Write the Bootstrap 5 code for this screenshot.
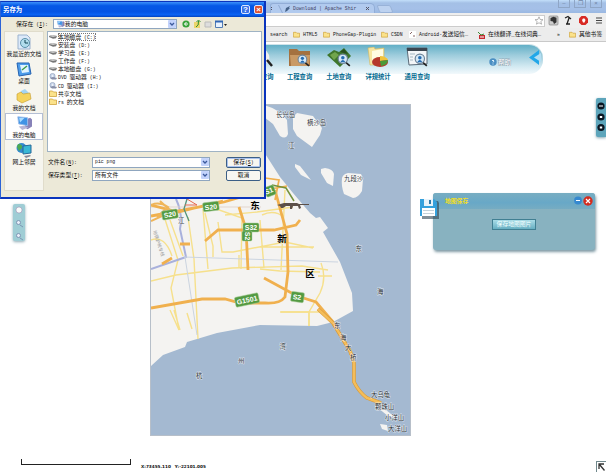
<!DOCTYPE html>
<html lang="zh-CN">
<head>
<meta charset="utf-8">
<title>地图保存</title>
<link href="https://cdn.jsdelivr.net/npm/bootstrap@5.3.0/dist/css/bootstrap.min.css" rel="stylesheet">
<style>
body{width:606px;height:472px;overflow:hidden;background:#fff;color:#111;font:5.8px/8px "Liberation Sans","Noto Sans CJK SC",sans-serif;white-space:nowrap}
svg{display:block;flex:none}
.lt{font-family:"Liberation Mono","Noto Sans CJK SC",monospace;font-size:4.8px}
/* browser frame */
.tabstrip{height:13px;background:linear-gradient(#c3dffa 0,#a4c0e6 3px,#a5c0e8 9px,#9ab8e2);padding-left:270px;font-size:4.8px;color:#446}
.tab-one{width:105px;height:10px;background:#b1caee;border:1px solid #91add7;border-bottom:0;border-radius:3px 5px 0 0;line-height:9px}
.tab-new{width:14px;height:8px;margin-left:3px;background:#bdd2f0;border:1px solid #98b2d8;transform:skewX(22deg);border-radius:2px}
.wbtn{width:12px;height:8px;border:1px solid #8fa6c6;border-top:0;color:#6f84a5;line-height:7px;font-size:6px}
.toolbar{height:15px;background:#eee}
.omni{width:545px;height:12px;background:#fff;border:1px solid #ccc}
.bookmarks{height:14px;background:#ececec;border-bottom:1px solid #c9c9c9;padding-left:270px}
.bm{flex:none;gap:3px}
.w1{width:23px}.w2{width:30px}.w3{width:58px}.w4{width:28px}.w5{width:69px}.w6{width:79px}.w7{width:12px}
/* application banner */
.banner{width:543px;height:29px;margin-top:3px;padding-left:280px;background:linear-gradient(#62afc6 0,#9dccdc 35%,#d4eaf2 75%,#f2f9fc);border-radius:0 14px 14px 0;box-shadow:0 -1px 0 #cfe3ea}
.mod{width:39.2px;color:#00698f;font-weight:700;font-size:6.3px;padding-top:2px}
.mod span{margin-top:5px}
.help{margin:13px 0 0 52px;color:#9fb2c2;font-size:7px}
/* save dialog */
.dlg{left:0;top:1px;width:266px;height:198px;background:#ece9d8;border:2px solid #0a34bd;border-width:1px 2px 2px 1px;border-left-color:#2c63d6;z-index:5}
.dlg-title{height:15px;background:linear-gradient(#3a91fb,#0458e6 25%,#0454e4 65%,#0a63f4 85%,#0342bd);color:#fff;font-weight:700;font-size:6.4px;padding:0 1px 0 2px}
.tb{width:9px;height:9px;border:1px solid #dbe6ff;border-radius:2px;font-size:8px;line-height:7px;background:#3b73e8}
.tb-x{background:#dd5331}
.dd{background:#fff;border:1px solid #8fa6bf;height:10px;padding-left:2px}
.arr{width:8px;height:8px;background:#c3d3fb;border-radius:1px}
.look{height:14px;padding-left:15px}
.look .dd{width:124px;margin-left:5px}
.places{width:40px;height:160px;background:#f6f5ee;border:1px solid #e0dccb;margin-left:3px}
.place{height:27px;padding-top:2px}
.place.on{background:#fff;border:1px solid #b4bfd4;padding-top:1px}
.files{width:215px;height:121px;background:#fff;border:1px solid #9fb3c4;margin-left:3px;padding:1px 0 0 1px}
.fl{height:8.1px;line-height:8px;gap:1px}
.sel{outline:1px dotted #777;outline-offset:-1px}
.frow{height:12.7px;padding-left:4px}
.frow .lab{width:44px}.frow .dd{width:118px;height:11px}
.btx{width:35px;height:11px;border:1px solid #3c5f86;border-radius:2px;background:#f7f6f1;margin-left:16px;line-height:9px}
.btx.pri{box-shadow:inset 0 0 0 1px #a9c2ee}
/* floating pieces */
.mapbox{left:150px;top:104px;width:261px;height:332px;border:1px solid #b7bfc9}
.minibar{left:13px;top:204px;width:12px;height:37px;background:#9fcdd5;border-radius:2px;box-shadow:0 1px 3px #8fabb5;z-index:3}
.sidebar3{right:0;top:98px;width:10px;height:39px;background:#5da5bb;border-radius:2px 0 0 2px;box-shadow:0 1px 3px #86a8b4}
.panel{left:433px;top:193px;width:162px;height:57px;background:#88b2c0;border-radius:3px;box-shadow:1px 2px 3px #7f9aa5}
.panel-h{height:16px;background:linear-gradient(#78adc2,#68a8c7 60%,#76acc2);border-radius:3px 3px 0 0;padding:0 2px 1px 12px;color:#f3df25;font-weight:700;font-size:5.8px}
.savebtn{width:44px;height:11px;margin:10px 0 0 59px;background:linear-gradient(#a9dce7,#67afc2);border:1px solid #417f92;color:#f2ffff;line-height:9px}
.disk{left:418px;top:198px;z-index:2}
.scale{left:21px;top:459px;width:110px;height:6px;border:1px solid #222;border-top:0}
.coords{left:141px;top:463px;font:700 4.2px/8px "DejaVu Sans",sans-serif;gap:4px}
.corner{right:0;top:461px;width:10px;height:11px;border:1px solid #70888c;border-right:0;border-bottom:0}
</style>
<script src="https://cdn.jsdelivr.net/npm/bootstrap@5.3.0/dist/js/bootstrap.bundle.min.js"></script>
</head>
<body class="position-relative">
<svg width="0" height="0" class="position-absolute">
<defs>
<symbol id="fold" viewBox="0 0 8 7"><path d="M.5 6.500v-5.500h3l1 1h3v4.500z" fill="#fbe28a" stroke="#c99a2e" stroke-width=".7"/></symbol>
<symbol id="drv" viewBox="0 0 8 7"><path d="M0 3l3-1 5 1-1 2.300-3 .5-4-1.800z" fill="#777"/><path d="M0 3l3-1 5 1-4 1z" fill="#ccc"/></symbol>
<symbol id="cd" viewBox="0 0 8 7"><circle cx="3.500" cy="3" r="2.600" fill="#cbd7ea" stroke="#8393b4" stroke-width=".6"/><circle cx="3.500" cy="3" r=".7" fill="#fff"/><path d="M1 5l3-1 4 1-1 1.500H3z" fill="#888fa8"/></symbol>
<symbol id="pc" viewBox="0 0 20 18"><path d="M12 5l5-2 2 2v8l-5 3-3-2z" fill="#8782b8"/><path d="M3 2l11 1v9L4 10z" fill="#3f93e5" stroke="#9dbce9"/><path d="M4.500 3l6 .5-5 5z" fill="#a9dcff"/><path d="M4 13l6-1 5 2-7 3z" fill="#b7b6d6"/></symbol>
<symbol id="chev" viewBox="0 0 8 8"><path d="M2 3l2 2 2-2" fill="none" stroke="#3c5a9c" stroke-width="1.300"/></symbol>
<symbol id="lens" viewBox="0 0 12 12"><path d="M7.500 8l3.500 3" stroke="#222" stroke-width="1.500"/><circle cx="5" cy="5" r="4" fill="#d5e9f7" stroke="#6f8497"/><circle cx="5" cy="4" r="1.500" fill="#246bb0"/><path d="M2.800 8q2.200-4 4.400 0z" fill="#246bb0"/></symbol>
</defs>
</svg>

<div class="tabstrip d-flex align-items-end">
  <div class="tab-one d-flex align-items-center">
    <svg width="22" height="8"><path d="M-2 2l3 3m0-3l-3 3" stroke="#556"/><path d="M7-1l5 10" stroke="#8ea9d3"/><path d="M14 7l1-4 4-2-1 2h1l-3 3z" fill="#456288"/></svg>
    <span class="lt">Download | Apache Shir</span><svg class="ms-auto me-1" width="5" height="5"><path d="M1 1l3 3m0-3l-3 3" stroke="#556"/></svg>
  </div>
  <div class="tab-new"></div>
  <div class="d-flex ms-auto align-self-start me-1 text-center gap-1"><div class="wbtn">–</div><div class="wbtn">❐</div><div class="wbtn">×</div></div>
</div>
<div class="toolbar d-flex align-items-center">
  <div class="omni d-flex justify-content-end align-items-center"><svg width="10" height="9"><path d="M5 .8l1.200 2.700 2.800.2-2.200 1.800.8 2.700L5 6.800 2.400 8.200l.8-2.700L1 3.700l2.800-.2z" fill="#fff" stroke="#888" stroke-width=".6"/></svg></div>
  <svg width="59" height="13"><rect x="4" y="2" width="9" height="9" rx="1" fill="#ccc" stroke="#777" stroke-width=".6"/><path d="M5.500 4l3-1.200 3 1v4.500L9 10 8 7.500 5.500 7z" fill="#333"/><path d="M20 4l3-1.500L26 5M22 10l2-6m-3 6h4" stroke="#222" stroke-width="1.300" fill="none"/><path d="M36.500 2h4l2.500 2.500v4L40.500 11h-4L34 8.500v-4z" fill="#d82a24"/><path d="M37 6l1 2.500h1.500l1-2.500-1-1.500h-1.500z" fill="#fff"/><path d="M51 4h6m-6 2.500h6M51 9h6" stroke="#444" stroke-width="1.200"/></svg>
</div>
<div class="bookmarks lt d-flex align-items-center">
  <div class="bm w1">search</div>
  <div class="bm w2 d-flex align-items-center"><svg width="7" height="7"><use href="#fold"/></svg>HTML5</div>
  <div class="bm w3 d-flex align-items-center"><svg width="7" height="7"><use href="#fold"/></svg>PhoneGap-Plugin</div>
  <div class="bm w4 d-flex align-items-center"><svg width="7" height="7"><use href="#fold"/></svg>CSDN</div>
  <div class="bm w5 d-flex align-items-center"><svg width="7" height="7"><rect width="7" height="7" fill="#fff"/><path d="M1 3l2-2m1 4h2" stroke="#866"/></svg><span>Android-<span style="font-size:5.7px">发送短信…</span></span></div>
  <div class="bm w6 d-flex align-items-center"><svg width="7" height="8"><path d="M1 4h6v4H1z" fill="#c62a30"/><path d="M0 1l3 3 3-1" stroke="#3a8c35" fill="none"/><path d="M2 6h4" stroke="#fff"/></svg><span style="font-size:5.8px">在线翻译_在线词典…</span></div>
  <div class="bm w7">»</div>
  <div class="bm d-flex align-items-center"><svg width="7" height="7"><use href="#fold"/></svg><span style="font-size:5.8px">其他书签</span></div>
</div>

<div class="banner d-flex align-items-start">
  <div class="mod d-flex flex-column align-items-center"><svg width="24" height="21"><path d="M1 19V2h8l2 2h11v15z" fill="#a4713f"/><path d="M3 19L2 8h20l-1 11z" fill="#c99a65"/><use href="#lens" x="9" y="7" width="13" height="13"/></svg><span>工程查询</span></div>
  <div class="mod d-flex flex-column align-items-center"><svg width="26" height="21"><path d="M1 8l7-5 5 2 5-4 7 8-11 11z" fill="#3e762c"/><path d="M4 8l5-3 4 3-5 5z" fill="#71a54c"/><path d="M14 5l4-3 4 5z" fill="#274f20"/><use href="#lens" x="11" y="6" width="14" height="14"/></svg><span>土地查询</span></div>
  <div class="mod d-flex flex-column align-items-center"><svg width="24" height="21"><path d="M2 1l6-1 1 2 9-1v17H4z" fill="#f6e5a2" stroke="#d2b75c" stroke-width=".6"/><path d="M6 4l11-2v14H6z" fill="#fffbe3"/><ellipse cx="14" cy="15" rx="8" ry="5" fill="#b5372b"/><path d="M14 14V9q6 0 8 4z" fill="#f1c33b"/><path d="M14 14l8-1q0 5-7 6z" fill="#4b9a37"/></svg><span>详规统计</span></div>
  <div class="mod d-flex flex-column align-items-center"><svg width="24" height="21"><path d="M2 1h20v16l-18 1z" fill="#f3f6f8" stroke="#5a6a78"/><path d="M2 1h20v3H2z" fill="#3b4650"/><path d="M5 7h5m-5 3h3m-3 3h3" stroke="#a5b9c4"/><use href="#lens" x="9" y="6" width="14" height="14"/></svg><span>通用查询</span></div>
  <div class="help d-flex align-items-center"><svg width="9" height="8"><circle cx="4" cy="4" r="3.700" fill="#4b8fc3"/><path d="M3 3q1-2 2 0L4 4.500m0 1v1" stroke="#d9eefa" fill="none"/></svg><svg width="16" height="8"><text x="0" y="6.500" font-size="6.600" fill="#fff" stroke="#91a7b5" stroke-width=".9" paint-order="stroke">帮助</text></svg></div>
  <svg class="ms-auto" width="14" height="28"><path d="M10 5v15L0 12.500z" fill="#22a7e8"/><path d="M12 8v9l-7-4.500z" fill="#b2def4"/></svg>
</div>
<div class="position-absolute fw-bold" style="left:261px;top:73px;color:#00698f;font-size:6.3px">查询</div>
<svg class="position-absolute" style="left:264px;top:48px" width="10" height="20"><path d="M0 1q7 4 5 14H0z" fill="#eee"/><path d="M3 12l5 6" stroke="#222" stroke-width="2.500"/></svg>

<div class="mapbox position-absolute">
<svg width="259" height="330" viewBox="151 105 259 330" font-size="6.400" fill="none">
  <rect x="151" y="105" width="259" height="330" fill="#a4b9d1"/>
  <g fill="#f4f3f1">
    <path d="M151 105h113v47l16 25 13 16 17 20 6 5 4-1 8 11-5 4 17 30 12 31 1 18-20 11-16 4-57-1-43 8-30 9-2 5-22 8-12 11z"/>
    <path d="M264 105q17 5 23 15l1 14q-2 6-8 2l-7-12-9-7z"/>
    <path d="M293 117l4-4 16 3 9 12-2 7-8 12-15-11-4-7zM295 164l5 2 11 14-10-5-6-8zM321 169l4-1q8 1 9 6l-1 12-6-3-6-10zM342 178q1-4 6-5l13 1 2 5-1 12q-4 7-9 7l-9-4q-3-8-2-16z"/>
    <path d="M378 408l8 2 10 8-8-2zM380 424l7 1 1 6-6-2z"/>
  </g>
  <g stroke="#f6e08c" stroke-width="1.400">
    <path d="M151 281l25-6 56-7 70-2 26 4M188 217l6 42 4 80M164 216l14 44-7 28 8 42M170 220l13 36M151 240q14-5 21 16M205 213l8 33v11M218 222l4 30h11l52-10 28 6M225 215l32-3 36-5M239 255v13M260 220l4 48M285 190l-4 80M205 205l37 13-1 51M321 263q6 15-1 30l-11 19v14M280 312h40M174 310l6 20M262 215q12-6 22 2M318 276h14M208 269l-5-60M262 247h52"/>
    <path d="M170 310l9 20M187 313l5 16M281 312h28v14M260 269l20 2 40 1"/>
  </g>
  <path d="M176 199q7 15 4 30l6 28-35 12" stroke="#a9b1dc" stroke-width="2"/>
  <path d="M184 257l154 5M185 257l12 78" stroke="#cbd4e0"/>
  <path d="M151 207h110" stroke="#e3d5cd"/>
  <g stroke="#f0b04e" stroke-width="2.800">
    <path d="M151 308l51-9h23l15 4h25q15 1 20-6l3-25-1-38-12-44M205 241l13-11h56l22-5 4-5M151 216l33-6 40-8 41-12M239 207l7 22 2 41M264 278l33 18 19 6 17 20M151 205l27 7 45-11M180 244h10M162 264l10-6"/>
    <path d="M265 178l14 2-4 20M265 190l22-4" stroke-width="1.700"/>
  </g>
  <path d="M187 199l-3 10 5 12" stroke="#53947b" stroke-width="1.300"/><path d="M185 205h12l-10-6" stroke="#e5694f"/>
  <path d="M272 185l14 3 8 13" stroke="#76923c" stroke-width="1.500"/>
  <path d="M277 205l7-2h13l2 1h10v1h-9l1 3-2 1-1-3h-5l-1 3h-2v-3h-4l-3 2h-2l-1-2z" fill="#5c5049"/>
  <path d="M318 309l15 14 17 28 4 12v19q5 10 13 16l14 5" stroke="#d79a39" stroke-width="3.600"/>
  <path d="M318 309l15 14 17 28 4 12v19q5 10 13 16l14 5" stroke="#f4bd5a" stroke-width="2.400"/>
  <path d="M151 205q8-4 17 2l-11 10m3-16l13 12m-22 8l24-11" stroke="#efb55a" stroke-width="2"/>
  <g fill="#539a42" stroke="#a9cc99" stroke-width=".5">
    <rect x="162" y="210" width="16" height="9" rx="1.500" transform="rotate(-9 170 215)"/>
    <rect x="203" y="202" width="16" height="9" rx="1.500" transform="rotate(-7 211 207)"/>
    <rect x="265" y="186" width="10" height="10" rx="1.500" transform="rotate(-20 270 191)"/>
    <rect x="243" y="223" width="16" height="9" rx="1.500"/><rect x="242" y="231" width="10" height="10" rx="1.500"/>
    <rect x="235" y="295" width="24" height="10" rx="1.500" transform="rotate(-12 247 300)"/>
    <rect x="291" y="292" width="13" height="10" rx="1.500" transform="rotate(8 297 297)"/>
  </g>
  <g fill="#fff" font-weight="700" font-size="7" text-anchor="middle">
    <text x="170" y="217" transform="rotate(-9 170 215)">S20</text><text x="211" y="209.500" transform="rotate(-7 211 207)">S20</text>
    <text x="269" y="193" transform="rotate(-20 270 191)">S1</text><text x="251" y="230">S32</text><text x="0" y="0" transform="translate(244.500 236) rotate(90)">S2</text>
    <text x="247" y="302.500" transform="rotate(-12 247 300)">G1501</text><text x="297" y="299.500" transform="rotate(8 297 297)">S2</text>
  </g>
  <g fill="#000" font-weight="700" font-size="9.500" text-anchor="middle"><text x="255" y="209">东</text><text x="282" y="242">新</text><text x="310" y="277">区</text></g>
  <g fill="#30343a" stroke="#fff" stroke-width="1" paint-order="stroke" stroke-opacity=".65">
    <text x="276" y="117">长兴岛</text><text x="307" y="125">横沙岛</text><text x="288" y="147.500">江</text><text x="344" y="181">九段沙</text>
    <text x="355.500" y="250.500">东</text><text x="377" y="293.500">海</text><text x="279.500" y="349">湾</text><text x="238" y="363">州</text><text x="196" y="378">杭</text>
    <text x="334" y="328">东</text><text x="340" y="340">海</text><text x="345" y="350">大</text><text x="350" y="360">桥</text>
    <text x="371" y="397">大乌龟</text><text x="375" y="409">颗珠山</text><text x="385" y="420">小洋山</text><text x="388" y="431">大洋山</text><text x="178" y="223">江</text>
  </g>
  <text transform="translate(153 231) rotate(72)" font-size="4.500" fill="#999">地铁沪杭专线</text>
</svg>
</div>

<div class="minibar position-absolute"><svg width="12" height="37"><circle cx="6" cy="6" r="3" fill="#f8fbfa" stroke="#869"  stroke-width=".4"/><g fill="#e7eef8" stroke="#7187aa" stroke-width=".8"><path d="M7 21l3 2M7 34l3 2"/><circle cx="5.500" cy="18.500" r="2"/><circle cx="5.500" cy="31.500" r="2"/></g></svg></div>
<div class="sidebar3 position-absolute"><svg width="10" height="39"><g fill="#0a1622"><circle cx="5" cy="8" r="3.600"/><circle cx="5" cy="19" r="3.600"/><circle cx="5" cy="29.500" r="3.600"/></g><path d="M3.500 8h1m1 0h1M3.800 19h2.400m-2.400 10.500h2.400" stroke="#fff" stroke-width="1.800"/></svg></div>

<div class="panel position-absolute">
  <div class="panel-h d-flex align-items-center"><span>地图保存</span>
    <svg class="ms-auto" width="20" height="12"><circle cx="5" cy="5.500" r="3.900" fill="#3689d0"/><path d="M3 5.500h4" stroke="#fff"/><circle cx="15" cy="6" r="4.700" fill="#d32d20"/><path d="M13 4l4 4m0-4l-4 4" stroke="#fff" stroke-width="1.200"/></svg></div>
  <div class="savebtn text-center">保存地图图片</div>
</div>
<svg class="disk position-absolute" width="22" height="22"><path d="M4 3h16l1 2v16H4z" fill="#304552" opacity=".6"/><path d="M2 1h14l3 3v14H2z" fill="#35a0dc"/><path d="M6 1h9v7H6z" fill="#e8f3fa"/><path d="M11 2h2v4h-2z" fill="#2e78a8"/><path d="M4 10h13v8H4z" fill="#fff"/><path d="M5 12.500h11M5 15.500h11" stroke="#b6c7d1" stroke-width=".8"/></svg>

<div class="scale position-absolute"></div>
<div class="coords position-absolute d-flex"><span>X:73455.110</span><span>Y:-22101.005</span></div>
<div class="corner position-absolute"><svg width="9" height="10"><path d="M2 7V2h5M2.500 2.500l5 6" fill="none" stroke="#333" stroke-width="1.300"/></svg></div>

<div class="dlg position-absolute">
  <div class="dlg-title d-flex align-items-center"><span class="me-auto">另存为</span><span class="tb text-center me-1">?</span><span class="tb tb-x text-center">×</span></div>
  <div class="look d-flex align-items-center">
    <span>保存在<span class="lt"> (<u>I</u>):</span></span>
    <div class="dd d-flex align-items-center"><svg width="9" height="8"><use href="#pc"/></svg><span>我的电脑</span><span class="arr ms-auto"><svg width="8" height="8"><use href="#chev"/></svg></span></div>
    <svg style="margin-left:5px" width="46" height="12"><circle cx="4" cy="6" r="3.600" fill="#37a239"/><path d="M6 6H2.500m2-2l-2 2 2 2" stroke="#fff" fill="none"/><path d="M12 4h6v6h-6z" fill="#ecd56c"/><path d="M14 9q3-1 2.500-6M14.500 4l2-2 2 2" stroke="#31902d" fill="none"/><path d="M23 4h6v5h-6z" fill="#ddd" stroke="#bbb"/><path d="M33.500 3.500h7v6h-7z" fill="#e7f1fd" stroke="#527cb4"/><path d="M33 3.500h8" stroke="#3167b6" stroke-width="2"/><path d="M42 6h3l-1.500 2z" fill="#222"/></svg>
  </div>
  <div class="d-flex">
    <div class="places text-center">
      <div class="place d-flex flex-column align-items-center"><svg width="18" height="16"><path d="M3 1h9l3 3v11H3z" fill="#dceafa" stroke="#9bb2ce"/><circle cx="10" cy="9" r="4.500" fill="#b1dcec" stroke="#5a90aa"/><path d="M10 6v3h3" stroke="#145" fill="none"/></svg>我最近的文档</div>
      <div class="place d-flex flex-column align-items-center"><svg width="18" height="16"><path d="M2 2h12l2 11-12 2z" fill="#4d9cea" stroke="#2563b1"/><path d="M5 4h8l1 7-7 1z" fill="#e0f3ff"/><path d="M7 9l5-4" stroke="#3c9b48" stroke-width="1.500"/></svg>桌面</div>
      <div class="place d-flex flex-column align-items-center"><svg width="18" height="16"><path d="M6 3l4-2 4 4-3 5-6-2z" fill="#a3d4f2"/><path d="M2 6l4-2 2 2 7-1 1 6-9 4-5-3z" fill="#f5d35d" stroke="#c59b2c" stroke-width=".6"/></svg>我的文档</div>
      <div class="place on d-flex flex-column align-items-center"><svg width="18" height="16"><use href="#pc"/></svg>我的电脑</div>
      <div class="place d-flex flex-column align-items-center"><svg width="18" height="16"><circle cx="6.500" cy="6" r="5" fill="#338ad0"/><path d="M3 2q5 0 4 4l-3 3-2-4z" fill="#4eaa51"/><path d="M8 4l8-1v8l-8 1z" fill="#39b7d5" stroke="#276999"/><path d="M9 14l6-1 1 1-5 2z" fill="#889"/></svg>网上邻居</div>
    </div>
    <div>
      <div class="files">
        <div class="fl d-flex"><svg width="8" height="7"><use href="#drv"/></svg><span class="sel">本地磁盘<span class="lt"> (C:)</span></span></div>
        <div class="fl d-flex"><svg width="8" height="7"><use href="#drv"/></svg><span>安装盘<span class="lt"> (D:)</span></span></div>
        <div class="fl d-flex"><svg width="8" height="7"><use href="#drv"/></svg><span>学习盘<span class="lt"> (E:)</span></span></div>
        <div class="fl d-flex"><svg width="8" height="7"><use href="#drv"/></svg><span>工作盘<span class="lt"> (F:)</span></span></div>
        <div class="fl d-flex"><svg width="8" height="7"><use href="#drv"/></svg><span>本地磁盘<span class="lt"> (G:)</span></span></div>
        <div class="fl d-flex"><svg width="8" height="7"><use href="#cd"/></svg><span><span class="lt">DVD </span>驱动器<span class="lt"> (H:)</span></span></div>
        <div class="fl d-flex"><svg width="8" height="7"><use href="#cd"/></svg><span><span class="lt">CD </span>驱动器<span class="lt"> (I:)</span></span></div>
        <div class="fl d-flex"><svg width="8" height="7"><use href="#fold"/></svg><span>共享文档</span></div>
        <div class="fl d-flex"><svg width="8" height="7"><use href="#fold"/></svg><span><span class="lt">rs </span>的文档</span></div>
      </div>
      <div class="frow d-flex align-items-center mt-1"><span class="lab">文件名<span class="lt">(<u>N</u>):</span></span><div class="dd d-flex align-items-center"><span class="lt">pic png</span><span class="arr ms-auto"><svg width="8" height="8"><use href="#chev"/></svg></span></div><div class="btx pri text-center">保存<span class="lt">(<u>S</u>)</span></div></div>
      <div class="frow d-flex align-items-center"><span class="lab">保存类型<span class="lt">(<u>T</u>):</span></span><div class="dd d-flex align-items-center"><span>所有文件</span><span class="arr ms-auto"><svg width="8" height="8"><use href="#chev"/></svg></span></div><div class="btx text-center">取消</div></div>
    </div>
  </div>
</div>
</body>
</html>
